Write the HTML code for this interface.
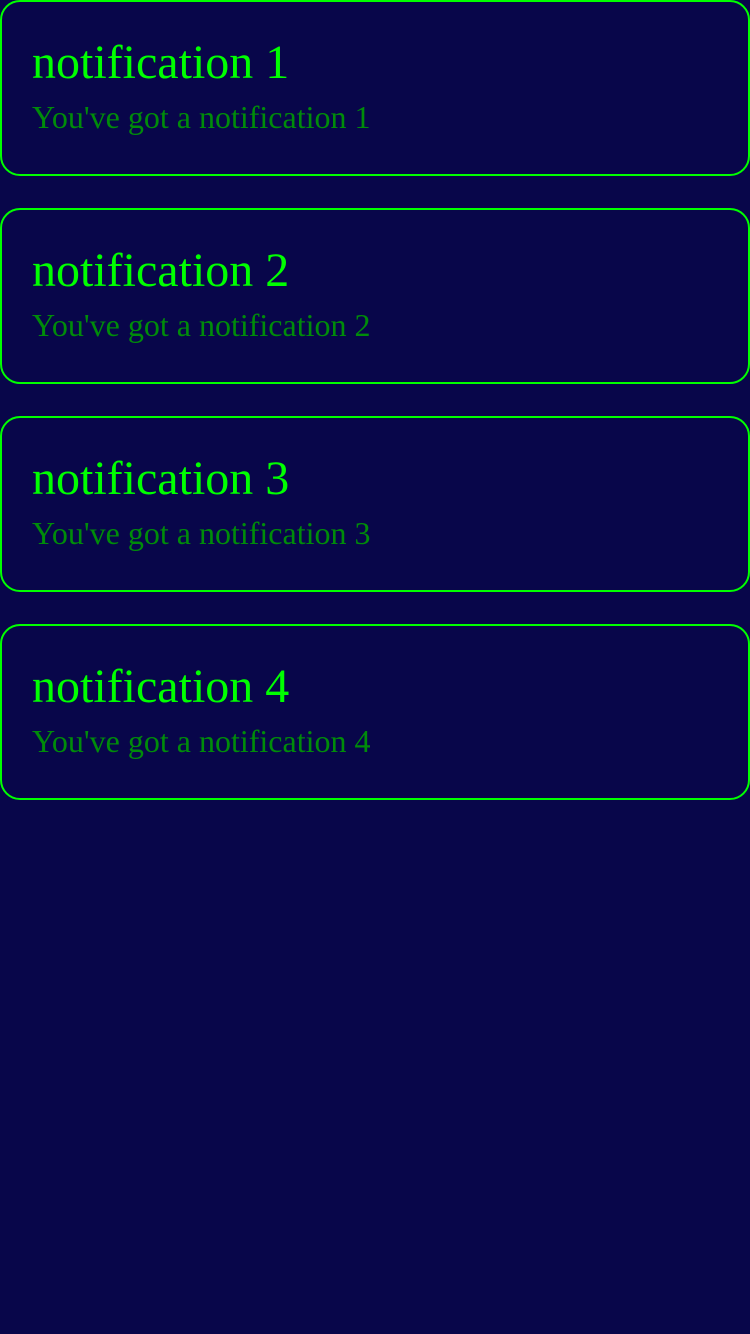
<!DOCTYPE html>
<html><head><style>
html,body{margin:0;padding:0;background:#08064a;width:750px;height:1334px;overflow:hidden}
.c{position:absolute;left:0;width:746px;height:172px;border:2px solid #00ff00;border-radius:20px;box-sizing:content-box;font-family:"Liberation Serif",serif}
.t{position:absolute;left:30px;top:33px;font-size:48px;line-height:56px;color:#00ff00;white-space:nowrap}
.s{position:absolute;left:30px;top:95px;font-size:32px;line-height:40px;color:#008c0a;white-space:nowrap}
</style></head><body>
<div class="c" style="top:0"><div class="t">notification 1</div><div class="s">You've got a notification 1</div></div>
<div class="c" style="top:208px"><div class="t">notification 2</div><div class="s">You've got a notification 2</div></div>
<div class="c" style="top:416px"><div class="t">notification 3</div><div class="s">You've got a notification 3</div></div>
<div class="c" style="top:624px"><div class="t">notification 4</div><div class="s">You've got a notification 4</div></div>
</body></html>
